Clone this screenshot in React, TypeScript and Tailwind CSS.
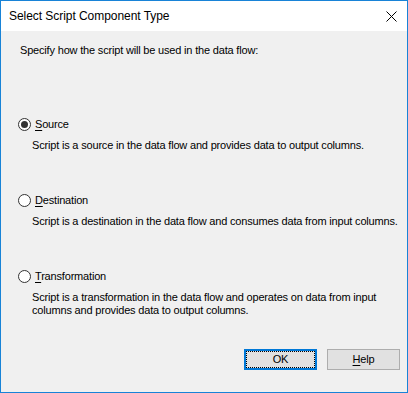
import React, { useState } from 'react';

type Kind = 'source' | 'destination' | 'transformation';

const options: { id: Kind; key: string; rest: string; text: string[] }[] = [
  { id: 'source', key: 'S', rest: 'ource', text: ['Script is a source in the data flow and provides data to output columns.'] },
  { id: 'destination', key: 'D', rest: 'estination', text: ['Script is a destination in the data flow and consumes data from input columns.'] },
  {
    id: 'transformation',
    key: 'T',
    rest: 'ransformation',
    text: ['Script is a transformation in the data flow and operates on data from input', 'columns and provides data to output columns.'],
  },
];

const Radio: React.FC<{ checked: boolean }> = ({ checked }) => (
  <span className="w-[13px] h-[13px] rounded-full border border-[#333333] bg-white flex items-center justify-center shrink-0">
    {checked && <span className="w-[7px] h-[7px] rounded-full bg-[#333333]" />}
  </span>
);

export default function App() {
  const [kind, setKind] = useState<Kind>('source');

  return (
    <div className="w-[408px] h-[393px] border border-[#1883d7] bg-[#f0f0f0] flex flex-col text-[11px] leading-[13px] tracking-[-0.18px] whitespace-nowrap text-black font-['Liberation_Sans',Arial,sans-serif]">
      {/* title bar */}
      <div className="h-[30px] bg-white flex items-center justify-between shrink-0">
        <span className="pl-[8px] pt-[1px] text-[12px] tracking-[-0.05px]">Select Script Component Type</span>
        <svg width="11" height="11" viewBox="0 0 11 11" className="mr-[10px]">
          <path d="M0.5 0.5 L10.5 10.5 M10.5 0.5 L0.5 10.5" stroke="#000" strokeWidth="1" />
        </svg>
      </div>

      <div className="flex-1 flex flex-col px-[19px] pt-[13px]">
        <p>Specify how the script will be used in the data flow:</p>

        <div className="mt-[61px] flex flex-col gap-[42px]">
          {options.map((o) => (
            <div key={o.id} onClick={() => setKind(o.id)} className="cursor-default">
              <div className="flex items-start gap-[3px] -ml-[2px]">
                <Radio checked={kind === o.id} />
                <span className="ml-px">
                  <span className="underline underline-offset-2">{o.key}</span>
                  {o.rest}
                </span>
              </div>
              <div className="mt-[8px] ml-[12px]">
                {o.text.map((t) => (
                  <p key={t}>{t}</p>
                ))}
              </div>
            </div>
          ))}
        </div>

        <div className="mt-auto mb-[22px] flex justify-end gap-[10px] mr-[-12px]">
          <button className="w-[73px] h-[21px] border-2 border-[#0078d7] bg-[#e1e1e1] flex items-center justify-center">
            <span className="w-full h-full border border-dotted border-black flex items-center justify-center">OK</span>
          </button>
          <button className="w-[73px] h-[21px] border border-[#adadad] bg-[#e1e1e1] flex items-center justify-center">
            <span>
              <span className="underline underline-offset-2">H</span>elp
            </span>
          </button>
        </div>
      </div>
    </div>
  );
}
